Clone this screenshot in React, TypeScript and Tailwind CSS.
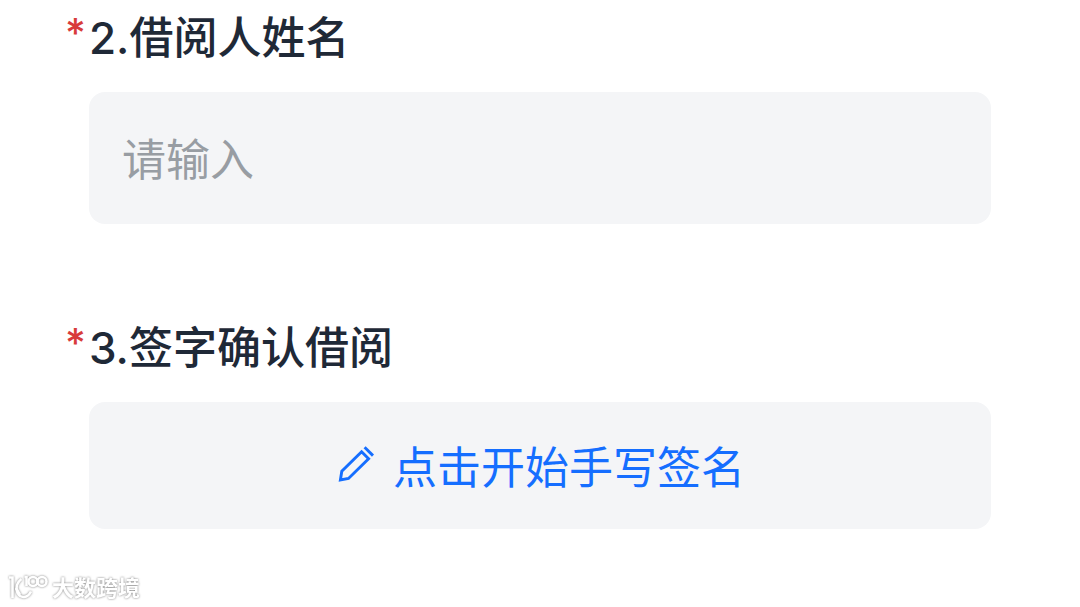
import type { ReactNode } from "react";

type QuestionProps = {
  id: string;
  title: string;
  children: ReactNode;
};

function Question({ id, title, children }: QuestionProps) {
  return (
    <div>
      <label htmlFor={id} className="-ml-6 flex h-16 text-[44px] leading-[64px] font-medium text-[#1f2937]">
        <span className="w-6 text-[40px] leading-[54px] text-[#d83b3b]">*</span>
        <span>{title}</span>
      </label>
      <div className="mt-[22px]">{children}</div>
    </div>
  );
}

function PencilIcon() {
  return (
    <svg viewBox="0 0 40 40" className="size-10" fill="none" stroke="currentColor" strokeWidth="2.9" aria-hidden="true">
      <path d="M24.600 5.700 31.600 12.700 11.500 32.500 3.400 34 4.800 25.300Z" />
      <path d="M27.600 1.200 36 9.600" />
    </svg>
  );
}

function Watermark() {
  return (
    <footer className="flex h-8 items-center gap-1 pl-2 text-white drop-shadow-[0_0_1px_rgba(0,0,0,0.5)]">
      <svg viewBox="0 0 40 30" className="h-[30px] w-10" fill="none" stroke="currentColor" strokeWidth="2.6" aria-hidden="true">
        <path d="M1 4.500H4.500V25" />
        <path d="M13.500 6C9 9 7 15 9.500 20C12.500 25.500 19.500 25.500 23 18.500" />
        <path d="M8 15 12 22" />
        <path d="M16.500 4H18.500V13" />
        <circle cx="25" cy="8.500" r="4.500" />
        <circle cx="34" cy="8.500" r="4.500" />
      </svg>
      <span className="text-[22px] leading-8 font-bold">大数跨境</span>
    </footer>
  );
}

export default function App() {
  return (
    <main className="min-h-screen bg-white font-[Inter,'Noto_Sans_CJK_SC',sans-serif]">
      <form className="flex flex-col gap-[92px] px-[89px] pt-1.5">
        <Question id="borrower" title="2.借阅人姓名">
          <input
            id="borrower"
            type="text"
            required
            placeholder="请输入"
            className="block h-[132px] w-full rounded-2xl bg-[#f4f5f7] px-[33px] pt-1 text-[44px] text-[#1f2937] outline-none placeholder:text-[#989da3]"
          />
        </Question>
        <Question id="signature" title="3.签字确认借阅">
          <button
            id="signature"
            type="button"
            className="flex h-[127px] w-full items-center justify-center gap-4 rounded-2xl bg-[#f4f5f7] pl-0.5 text-[44px] text-[#156eff]"
          >
            <PencilIcon />
            <span className="pt-1">点击开始手写签名</span>
          </button>
        </Question>
      </form>
      <div className="pt-[43px]">
        <Watermark />
      </div>
    </main>
  );
}
